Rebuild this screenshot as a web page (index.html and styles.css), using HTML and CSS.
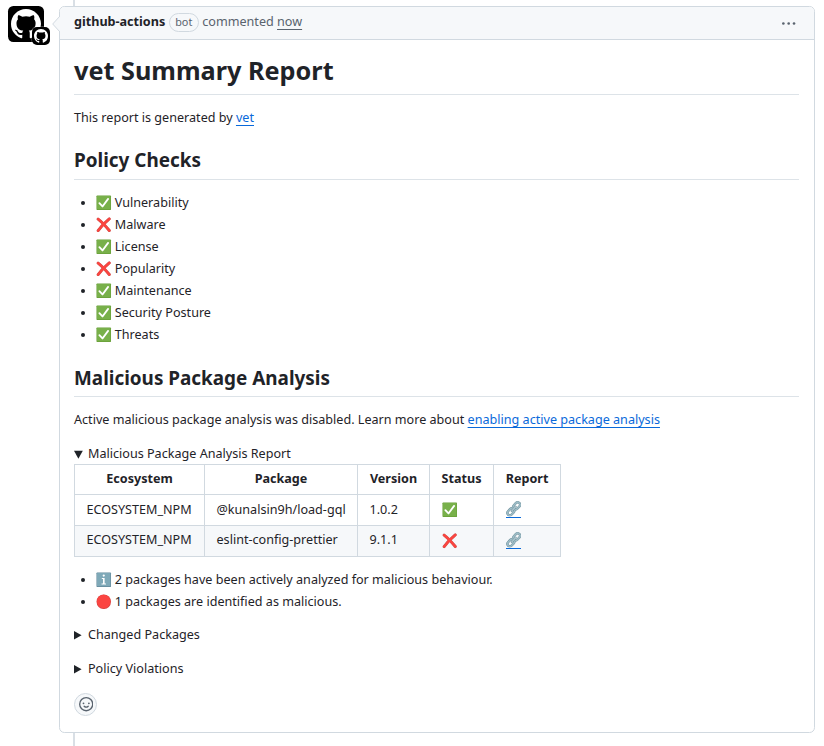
FILE: index.html
```html
<!DOCTYPE html>
<html lang="en">
<head>
<meta charset="utf-8">
<title>vet Summary Report</title>
<link rel="stylesheet" href="styles.css">
</head>
<body>
<svg class="defs" aria-hidden="true">
  <symbol id="mark" viewBox="0 0 16 16"><path d="M8 0C3.58 0 0 3.58 0 8c0 3.54 2.29 6.53 5.47 7.59.4.07.55-.17.55-.38 0-.19-.01-.82-.01-1.49-2.01.37-2.53-.49-2.69-.94-.09-.23-.48-.94-.82-1.13-.28-.15-.68-.52-.01-.53.63-.01 1.08.58 1.23.82.72 1.21 1.87.87 2.33.66.07-.52.28-.87.51-1.07-1.78-.2-3.64-.89-3.64-3.95 0-.87.31-1.59.82-2.15-.08-.2-.36-1.02.08-2.12 0 0 .67-.21 2.2.82.64-.18 1.32-.27 2-.27s1.36.09 2 .27c1.53-1.04 2.2-.82 2.2-.82.44 1.1.16 1.92.08 2.12.51.56.82 1.27.82 2.15 0 3.07-1.87 3.75-3.65 3.95.29.25.54.73.54 1.48 0 1.07-.01 1.93-.01 2.2 0 .21.15.46.55.38A8.01 8.01 0 0 0 16 8c0-4.42-3.58-8-8-8Z"/></symbol>
  <symbol id="check" viewBox="0 0 16 16"><rect x=".5" y=".5" width="15" height="15" rx=".8" fill="#689f38"/><rect x="1" y="1" width="13.9" height="13.6" rx=".6" fill="#78b04a"/><path d="M3.5 8.4 6.7 11.8 12.5 4" fill="none" stroke="#fff" stroke-width="1.9" stroke-linecap="round" stroke-linejoin="round"/></symbol>
  <symbol id="cross" viewBox="0 0 16 16"><g fill="none" stroke-linecap="round"><path d="M2.2 2.2C6 5 10 9.5 13.7 14M13.7 2C9.5 5.5 5.500 9.5 2.2 14" stroke="#c9504c" stroke-width="3.1"/><path d="M2.2 2.2C6 5 10 9.5 13.7 14M13.7 2C9.5 5.5 5.500 9.5 2.2 14" stroke="#fb4540" stroke-width="2.4"/></g></symbol>
  <symbol id="link" viewBox="0 0 16 16"><g fill="none" stroke="#6f919c" stroke-width="2.5"><rect x="7" y="2.500" width="8" height="5" rx="2.500" transform="rotate(-48 11 5)"/><rect x="1" y="8.700" width="8" height="5" rx="2.500" transform="rotate(-48 5 11.200)"/></g><g fill="none" stroke="#9dbcc6" stroke-width="1.600"><rect x="7" y="2.500" width="8" height="5" rx="2.500" transform="rotate(-48 11 5)"/><rect x="1" y="8.700" width="8" height="5" rx="2.500" transform="rotate(-48 5 11.200)"/></g><path d="m6 10.200 4-4.300" stroke="#6f919c" stroke-width="2.200" stroke-linecap="round"/><path d="m6 10.200 4-4.300" stroke="#b0c9d2" stroke-width="1.300" stroke-linecap="round"/></symbol>
  <symbol id="info" viewBox="0 0 16 16"><rect x=".5" y=".5" width="15" height="15" rx=".8" fill="#62899b"/><rect x="1" y="1" width="13.900" height="13.600" rx=".6" fill="#7fa9b8"/><circle cx="8" cy="3.700" r="1.150" fill="#fff"/><path d="M6 6.300h2.900v5.500h1.400v1H5.700v-1h1.500V7.300H6Z" fill="#fff"/></symbol>
  <symbol id="red" viewBox="0 0 16 16"><circle cx="8" cy="8" r="7.500" fill="#d94542"/><circle cx="7.900" cy="7.800" r="6.900" fill="#fb4541"/></symbol>
</svg>
<div class="timeline">
  <div class="avatar">
    <svg class="avatar-mark"><use href="#mark"/></svg>
    <div class="avatar-badge"><svg><use href="#mark"/></svg></div>
  </div>
  <article class="comment">
    <svg class="caret" viewBox="0 0 8 16"><path d="M8 0 0.7 8 8 16" fill="#f6f8fa" stroke="#d1d9e0"/></svg>
    <header class="comment-header">
      <strong>github-actions</strong><span class="label">bot</span><span>commented <a class="time">now</a></span>
      <svg class="kebab" viewBox="0 0 16 16"><circle cx="2.500" cy="8" r="1.400"/><circle cx="8.200" cy="8" r="1.400"/><circle cx="13.900" cy="8" r="1.400"/></svg>
    </header>
    <div class="body">
      <h1>vet Summary Report</h1>
      <p>This report is generated by <a class="link">vet</a></p>
      <h2>Policy Checks</h2>
      <ul>
        <li><svg class="emoji"><use href="#check"/></svg> Vulnerability</li>
        <li><svg class="emoji"><use href="#cross"/></svg> Malware</li>
        <li><svg class="emoji"><use href="#check"/></svg> License</li>
        <li><svg class="emoji"><use href="#cross"/></svg> Popularity</li>
        <li><svg class="emoji"><use href="#check"/></svg> Maintenance</li>
        <li><svg class="emoji"><use href="#check"/></svg> Security Posture</li>
        <li><svg class="emoji"><use href="#check"/></svg> Threats</li>
      </ul>
      <h2>Malicious Package Analysis</h2>
      <p>Active malicious package analysis was disabled. Learn more about <a class="link">enabling active package analysis</a></p>
      <section class="details open">
        <div class="summary"><svg viewBox="0 0 9 9"><path d="M0 .8h8.800L4.400 8.800Z"/></svg>Malicious Package Analysis Report</div>
        <table>
          <colgroup><col class="c1"><col class="c2"><col class="c3"><col class="c4"><col class="c5"></colgroup>
          <thead><tr><th>Ecosystem</th><th>Package</th><th>Version</th><th>Status</th><th>Report</th></tr></thead>
          <tbody>
            <tr><td>ECOSYSTEM_NPM</td><td>@kunalsin9h/load-gql</td><td>1.0.2</td><td><svg class="emoji"><use href="#check"/></svg></td><td><a class="icon-link"><svg class="emoji"><use href="#link"/></svg></a></td></tr>
            <tr><td>ECOSYSTEM_NPM</td><td>eslint-config-prettier</td><td>9.1.1</td><td><svg class="emoji"><use href="#cross"/></svg></td><td><a class="icon-link"><svg class="emoji"><use href="#link"/></svg></a></td></tr>
          </tbody>
        </table>
        <ul>
          <li><svg class="emoji"><use href="#info"/></svg> 2 packages have been actively analyzed for malicious behaviour.</li>
          <li><svg class="emoji"><use href="#red"/></svg> 1 packages are identified as malicious.</li>
        </ul>
      </section>
      <section class="details"><div class="summary"><svg viewBox="0 0 9 9"><path d="M0 0v8.600L7.600 4.300Z"/></svg>Changed Packages</div></section>
      <section class="details"><div class="summary"><svg viewBox="0 0 9 9"><path d="M0 0v8.600L7.600 4.300Z"/></svg>Policy Violations</div></section>
      <button class="react" aria-label="Add reaction"><svg viewBox="0 0 16 16"><path d="M8 0a8 8 0 1 1 0 16A8 8 0 0 1 8 0ZM1.500 8a6.500 6.500 0 1 0 13 0 6.500 6.500 0 0 0-13 0Zm3.820 1.636a.75.75 0 0 1 1.038.175l.007.009c.103.118.22.222.35.31.264.178.683.370 1.285.370.602 0 1.020-.192 1.285-.371.130-.088.247-.192.350-.310l.007-.008a.75.75 0 0 1 1.222.870l-.022-.015c.020.013.021.015.021.015v.001l-.001.002-.002.003-.005.007-.014.019a2.066 2.066 0 0 1-.184.213c-.160.166-.338.316-.530.445-.630.418-1.370.638-2.127.629-.946 0-1.652-.308-2.126-.630a3.331 3.331 0 0 1-.715-.657l-.014-.020-.005-.006-.002-.003v-.002h-.001l.613-.432-.614.430a.75.75 0 0 1 .183-1.044ZM12 7a1 1 0 1 1-2 0 1 1 0 0 1 2 0ZM5 8a1 1 0 1 1 0-2 1 1 0 0 1 0 2Z"/></svg></button>
    </div>
  </article>
</div>
</body>
</html>
```
FILE: styles.css
```css
* { box-sizing: border-box; }
body {
  margin: 0;
  background: #fff;
  color: #1f2328;
  font: 12.6px/18.9px "Noto Sans", sans-serif;
}
.defs { position: absolute; width: 0; height: 0; }
.timeline {
  display: flex;
  height: 746px;
  padding: 6px 9px 0 8px;
  background: linear-gradient(#d9dfe5, #d9dfe5) 73px 0 / 2px 100% no-repeat;
}
.avatar {
  position: relative;
  width: 36px;
  height: 36px;
  margin-right: 15px;
  border-radius: 5.4px;
  background: #000;
}
.avatar-mark { display: block; width: 30px; height: 30px; margin: 3px; fill: #fff; }
.avatar-badge {
  position: absolute;
  left: 24px;
  top: 21px;
  width: 18px;
  height: 18px;
  padding: 2px;
  border-radius: 5px;
  background: #000;
  box-shadow: 0 0 0 1px #fff3;
}
.avatar-badge svg { display: block; width: 14px; height: 14px; fill: #fff; }
.comment {
  position: relative;
  flex: 1;
  height: 727px;
  border: 1px solid #d1d9e0;
  border-radius: 5.4px;
  background: #fff;
}
.caret { position: absolute; left: -8px; top: 9px; width: 8px; height: 16px; }
.comment-header {
  display: flex;
  align-items: center;
  height: 33px;
  padding: 0 18.5px 1px 14px;
  border-bottom: 1px solid #d1d9e0;
  border-radius: 4.4px 4.4px 0 0;
  background: #f6f8fa;
  color: #59636e;
}
.comment-header strong { color: #1f2328; font-weight: 700; }
.label {
  height: 19px;
  margin: 0 3.6px;
  padding: 0 5.4px;
  border: 1px solid #d1d9e0;
  border-radius: 10px;
  font-size: 10.8px;
  line-height: 16px;
}
.time, .link { text-decoration: underline; text-underline-offset: 3px; text-decoration-thickness: 1px; }
.link { color: #0969da; }
.kebab { width: 15px; height: 15px; margin: 1px 0 0 auto; fill: #59636e; }
.body { padding: 15px 15px 14px 14px; }
h1, h2 { margin: 21.6px 0 14.4px; border-bottom: 1px solid #dde3e8; font-weight: 700; line-height: 1.25; }
h1 { margin: 0 0 13.8px; padding-bottom: 7.56px; font-size: 25.25px; line-height: 31.5px; }
h2 { padding-bottom: 5.67px; font-size: 18.9px; }
p { margin: 0 0 14.4px; }
ul { margin: 0 0 14.4px; padding-left: 22px; }
li + li { margin-top: 3.15px; }
.emoji { display: inline-block; width: 15.5px; height: 15.5px; vertical-align: -3px; }
li .emoji { margin-top: -2px; }
.details { margin-bottom: 14.4px; }
.summary { display: flex; align-items: center; }
.summary svg { width: 9px; height: 9px; margin-right: 5px; fill: #1f2328; }
table { width: 487px; margin-bottom: 14.4px; border-collapse: collapse; table-layout: fixed; }
.c1 { width: 130px; }
.c2 { width: 153px; }
.c3 { width: 72px; }
.c4 { width: 64px; }
.c5 { width: 67px; }
th, td { height: 30.7px; padding: 5px 11.5px; border: 1px solid #d1d9e0; text-align: left; white-space: nowrap; }
th { font-weight: 700; text-align: center; }
td .emoji { display: block; }
tbody tr:nth-child(2) { background: #f6f8fa; }
.icon-link { display: block; width: 15.5px; margin-top: -1px; border-bottom: 1px solid #0969da; }
.react {
  display: flex;
  align-items: center;
  justify-content: center;
  width: 23px;
  height: 23px;
  padding: 0 0 0 1px;
  border: 1px solid #d1d9e0;
  border-radius: 50%;
  background: #f6f8fa;
}
.react svg { width: 14.4px; height: 14.4px; fill: #59636e; }
```
